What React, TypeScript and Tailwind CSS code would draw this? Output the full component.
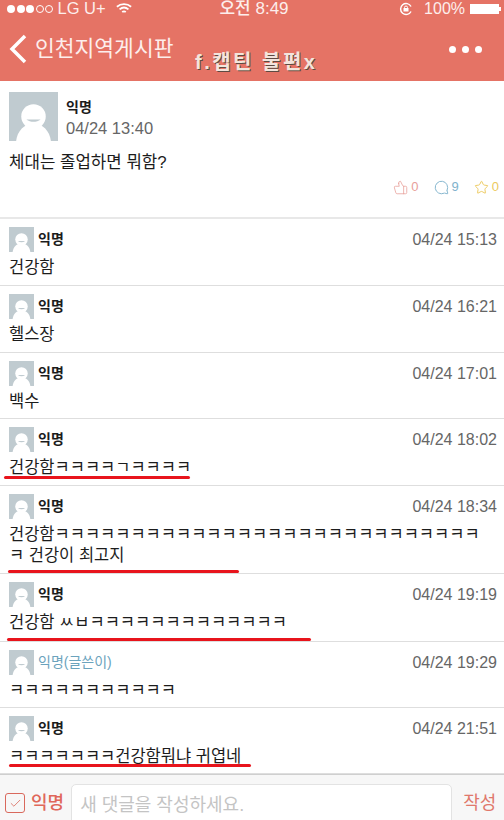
import { ThumbsUp, MessageCircle, Star, Check } from 'lucide-react'

const FONT = { fontFamily: '"Liberation Sans", "Noto Sans CJK KR", sans-serif' }

interface Comment {
  time: string
  lines: string[]
  height: string
  author?: boolean
  underline?: string
}

const COMMENTS: Comment[] = [
  { time: '04/24 15:13', lines: ['건강함'], height: 'h-[67px]' },
  { time: '04/24 16:21', lines: ['헬스장'], height: 'h-[67px]' },
  { time: '04/24 17:01', lines: ['백수'], height: 'h-[66px]' },
  {
    time: '04/24 18:02',
    lines: ['건강함ㅋㅋㅋㅋㄱㅋㅋㅋㅋ'],
    height: 'h-[67px]',
    underline: 'bottom-[6px] left-[4px] w-[186px]',
  },
  {
    time: '04/24 18:34',
    lines: ['건강함ㅋㅋㅋㅋㅋㅋㅋㅋㅋㅋㅋㅋㅋㅋㅋㅋㅋㅋㅋㅋㅋㅋㅋㅋㅋㅋㅋㅋ', 'ㅋ 건강이 최고지'],
    height: 'h-[88px]',
    underline: 'bottom-0 left-[8px] w-[231px]',
  },
  {
    time: '04/24 19:19',
    lines: ['건강함 ㅆㅂㅋㅋㅋㅋㅋㅋㅋㅋㅋㅋㅋㅋㅋ'],
    height: 'h-[68px]',
    underline: 'bottom-0 left-[7px] w-[304px]',
  },
  { time: '04/24 19:29', lines: ['ㅋㅋㅋㅋㅋㅋㅋㅋㅋㅋㅋ'], height: 'h-[66px]', author: true },
  {
    time: '04/24 21:51',
    lines: ['ㅋㅋㅋㅋㅋㅋㅋ건강함뭐냐 귀엽네'],
    height: 'h-[66px]',
    underline: 'bottom-[6px] left-[9px] w-[242px]',
  },
]

function Avatar({ size }: { size: number }) {
  return (
    <svg width={size} height={size} viewBox="0 0 48 48" className="shrink-0">
      <rect width="48" height="48" fill="#c0cbd0" />
      <circle cx="24" cy="24" r="12" fill="#fff" />
      <path d="M7 48c1-10 8-17 17-17s16 7 17 17z" fill="#fff" />
      <path d="M17 27c4 3 10 3 14 0" fill="#c0cbd0" />
    </svg>
  )
}

export default function App() {
  return (
    <div className="flex h-[820px] w-[504px] flex-col overflow-hidden bg-white text-[#1c1c1c]" style={FONT}>
      {/* 상단바 */}
      <div className="h-[81px] shrink-0 bg-[#e57365] text-white">
        <div className="flex h-[17px] items-center justify-between pl-[7px] pr-[3px] text-[16.500px] text-[#fdeeec]">
          <div className="flex w-[170px] items-center gap-[1.500px]">
            {[0, 1, 2].map((i) => (
              <span key={i} className="h-[8px] w-[8px] rounded-full bg-white" />
            ))}
            {[0, 1].map((i) => (
              <span key={i} className="h-[8px] w-[8px] rounded-full border border-white" />
            ))}
            <span className="ml-[3px] whitespace-nowrap">LG U+</span>
            <svg width="16" height="13" viewBox="0 0 18 14" fill="none" stroke="#fff" strokeWidth="2" className="ml-[9px]">
              <path d="M1 5c4.500-4 11.500-4 16 0M4 8c3-2.600 7-2.600 10 0M7 11c1.200-1 2.800-1 4 0" />
            </svg>
          </div>
          <span className="text-[17px] font-medium">오전 8:49</span>
          <div className="flex w-[170px] items-center justify-end">
            <svg width="16" height="14" viewBox="0 0 16 14" fill="none" stroke="#fff" strokeWidth="1.500">
              <path d="M13 9.500A5.500 5.500 0 1 1 13 4.500" />
              <rect x="5.500" y="6" width="5" height="3.500" fill="#fff" stroke="none" />
              <circle cx="8" cy="5.500" r="1.500" strokeWidth="1" />
            </svg>
            <span className="ml-[10px] text-[16px]">100%</span>
            <div className="ml-[5px] h-[10px] w-[29px] bg-white" />
            <div className="h-[4px] w-[2px] bg-white" />
          </div>
        </div>
        <div className="relative flex h-[64px] items-center">
          <svg width="18" height="30" viewBox="0 0 18 30" fill="none" stroke="#fff" strokeWidth="3.500" className="ml-[9px] shrink-0">
            <path d="M16 2 3 15l13 13" />
          </svg>
          <span className="ml-[8px] text-[21.500px] text-[#fdeeec]">인천지역게시판</span>
          <span className="absolute left-[195px] top-[30px] text-[20px] font-bold tracking-[2.500px] text-[#f3e4dc] [text-shadow:1px_1px_0_#5e4a42]">
            f.캡틴 불편x
          </span>
          <div className="ml-auto mr-[22px] flex gap-[6px]">
            {[0, 1, 2].map((i) => (
              <span key={i} className="h-[7px] w-[7px] rounded-full bg-white" />
            ))}
          </div>
        </div>
      </div>

      {/* 글 본문 */}
      <div className="h-[138px] shrink-0 border-b-2 border-[#e8e8e8] px-[9px] pt-[11px]">
        <div className="flex">
          <Avatar size={49} />
          <div className="ml-[8px] pt-[5px]">
            <div className="text-[14px] leading-[20px] font-bold">익명</div>
            <div className="mt-[1px] text-[16.500px] leading-[20px] text-[#666]">04/24 13:40</div>
          </div>
        </div>
        <div className="mt-[10px] text-[16.800px] leading-[24px]">체대는 졸업하면 뭐함?</div>
        <div className="mt-[2px] mr-[-4px] flex justify-end text-[13px] leading-[20px]">
          <span className="flex items-center gap-[3px] text-[#e8a09a]">
            <ThumbsUp size={15} strokeWidth={1.25} className="-scale-x-100" />0
          </span>
          <span className="ml-[15px] flex items-center gap-[3px] text-[#7fb2cc]">
            <MessageCircle size={15} strokeWidth={1.5} className="-scale-x-100" />9
          </span>
          <span className="ml-[15px] flex items-center gap-[3px] text-[#ecc95c]">
            <Star size={15} strokeWidth={1.5} />0
          </span>
        </div>
      </div>

      {/* 댓글 목록 */}
      {COMMENTS.map((c) => (
        <div key={c.time} className={`relative shrink-0 border-b border-[#dedede] px-[9px] pt-[8px] ${c.height}`}>
          <div className="flex items-center">
            <Avatar size={25} />
            <span className={`ml-[4px] text-[14px] font-bold ${c.author ? 'font-normal text-[#6ba3bd]' : ''}`}>
              {c.author ? '익명(글쓴이)' : '익명'}
            </span>
            <span className="ml-auto mr-[-2px] text-[16px] text-[#666]">{c.time}</span>
          </div>
          <div className="mt-[5px] text-[16.500px] leading-[21px] whitespace-nowrap">
            {c.lines.map((line) => (
              <div key={line}>{line}</div>
            ))}
          </div>
          {c.underline && <div className={`absolute h-[3px] rounded-full bg-[#e8141c] ${c.underline}`} />}
        </div>
      ))}

      {/* 댓글 입력 */}
      <div className="flex flex-1 items-start border-t border-[#cfcfcf] bg-[#f7f7f7] pt-[9px]">
        <div className="ml-[5px] mt-[9px] flex h-[20px] w-[20px] items-center justify-center rounded-[3px] border border-[#d9695d]">
          <Check size={13} strokeWidth={1.5} className="text-[#d9695d]" />
        </div>
        <span className="ml-[6px] mt-[6px] text-[18px] font-medium text-[#e0685b]">익명</span>
        <div className="ml-[7px] h-[50px] w-[381px] rounded-[5px] border border-[#e3e3e3] bg-white pl-[8px] pt-[7px] text-[18px] text-[#c4c4c4]">
          새 댓글을 작성하세요.
        </div>
        <span className="ml-[11px] mt-[6px] text-[18px] text-[#e0786c]">작성</span>
      </div>
    </div>
  )
}
